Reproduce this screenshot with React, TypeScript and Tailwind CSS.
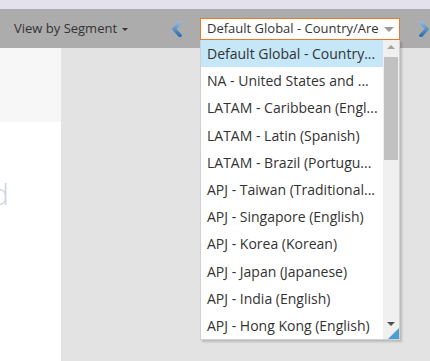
const items = [
  "Default Global - Country...",
  "NA - United States and ...",
  "LATAM - Caribbean (Engl...",
  "LATAM - Latin (Spanish)",
  "LATAM - Brazil (Portugu...",
  "APJ - Taiwan (Traditional...",
  "APJ - Singapore (English)",
  "APJ - Korea (Korean)",
  "APJ - Japan (Japanese)",
  "APJ - India (English)",
  "APJ - Hong Kong (English)",
];

function Chevron({ dir }: { dir: "left" | "right" }) {
  return (
    <svg width="12" height="16" viewBox="0 0 12 16">
      <defs>
        <linearGradient id={`g-${dir}`} x1="0" y1="0" x2="0" y2="1">
          <stop offset="0" stopColor="#8fb8dc" />
          <stop offset="1" stopColor="#2f6fb0" />
        </linearGradient>
      </defs>
      <path
        d={dir === "left" ? "M9 1.5 L3 8 L9 14.5" : "M3 1.5 L9 8 L3 14.5"}
        fill="none"
        stroke={`url(#g-${dir})`}
        strokeWidth="3.6"
        strokeLinejoin="round"
        strokeLinecap="round"
      />
    </svg>
  );
}

export default function App() {
  return (
    <div
      className="w-[430px] h-[361px] overflow-hidden relative bg-[#e3e3e3] flex flex-col"
      style={{ fontFamily: '"Open Sans", "Noto Sans", sans-serif' }}
    >
      <div className="h-[9px] bg-[#e3e1ec]" />
      <div className="h-[39px] bg-[#acacac] flex items-center relative whitespace-nowrap">
        <div className="pl-[14px] w-[158px] shrink-0 text-[13px] text-[#333] flex items-center gap-[5px]">
          View by Segment
          <span className="border-x-[3px] border-t-[3px] border-x-transparent border-t-[#333] mt-[1px]" />
        </div>
        <div className="shrink-0 mt-[1px] ml-[13px]">
          <Chevron dir="left" />
        </div>
        <div className="shrink-0 ml-[17px] w-[200px] h-[22px] bg-white border border-[#e8782a] flex items-center pl-[6px] text-[13px] text-[#333] overflow-hidden relative">
          <span className="overflow-hidden w-[172px]">Default Global - Country/Area</span>
          <span className="absolute right-[5px] top-[8px] border-x-[5px] border-t-[5px] border-x-transparent border-t-[#999]" />
        </div>
        <div className="shrink-0 ml-[18px] mt-[1px]">
          <Chevron dir="right" />
        </div>
      </div>
      <div className="flex flex-1">
        <div className="w-[61px] flex flex-col">
          <div className="h-[74px] bg-[#f7f7f7]" />
          <div className="flex-1 bg-white pt-[57px] overflow-hidden">
            <div className="text-[30px] leading-none font-light text-[#c9d6dd] -ml-[9px]">d</div>
          </div>
        </div>
      </div>

      {/* dropdown list */}
      <div className="absolute left-[200px] top-[40px] w-[200px] h-[300px] bg-white border border-[#d0d0d0] border-t-0 shadow-[2px_2px_2px_rgba(0,0,0,0.18)] flex">
        <ul className="flex-1 text-[14px] text-[#333] whitespace-nowrap overflow-hidden">
          {items.map((t, i) => (
            <li
              key={t}
              className={`h-[27.2px] flex items-center pl-[6px] ${i === 0 ? "bg-[#c5e7f8]" : ""}`}
            >
              {t}
            </li>
          ))}
        </ul>
        <div className="w-[16px] bg-[#f0f0f0] relative flex flex-col items-center">
          <span className="mt-[5px] border-x-[4px] border-b-[4px] border-x-transparent border-b-[#a3a3a3]" />
          <div className="mt-[8px] w-[14px] h-[103px] bg-[#c1c1c1]" />
          <span className="absolute bottom-[13px] border-x-[4px] border-t-[4px] border-x-transparent border-t-[#505050]" />
          <span className="absolute right-0 bottom-0 border-l-[11px] border-b-[11px] border-l-transparent border-b-[#4a9fd0]" />
        </div>
      </div>
    </div>
  );
}
